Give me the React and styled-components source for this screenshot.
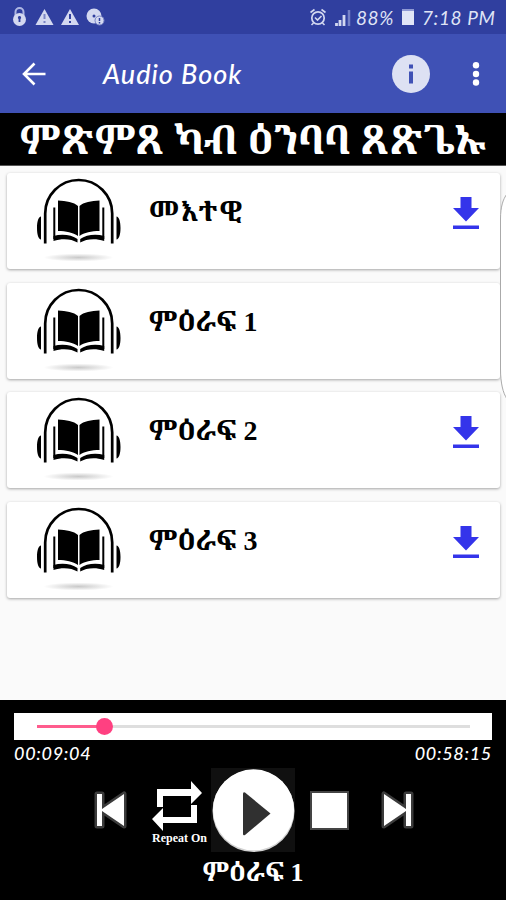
import React from "react";
//Styling
import styled, { createGlobalStyle } from "styled-components";

const chapters = [
  { id: 0, name: "መእተዊ", download: true, spacing: 1.3 },
  { id: 1, name: "ምዕራፍ 1", download: false, spacing: -0.2 },
  { id: 2, name: "ምዕራፍ 2", download: true, spacing: -0.2 },
  { id: 3, name: "ምዕራፍ 3", download: true, spacing: -0.2 },
];

const player = { elapsed: "00:09:04", total: "00:58:15", progress: 15.6 };

const App = () => {
  return (
    <Screen>
      <GlobalStyle />
      <StatusBar>
        <NoticeIcons />
        <StatusRight>
          <SignalIcons />
          <Handwritten $width={44}>88%</Handwritten>
          <Battery />
          <Handwritten $width={76}>7:18 PM</Handwritten>
        </StatusRight>
      </StatusBar>
      <AppBar>
        <BackIcon />
        <AppTitle>Audio Book</AppTitle>
        <InfoIcon />
        <MenuIcon />
      </AppBar>
      <Banner>
        <h1>ምጽምጸ ካብ ዕንባባ ጸጽጌኡ</h1>
      </Banner>
      <List>
        {chapters.map((chapter) => (
          <Card key={chapter.id} $spacing={chapter.spacing}>
            <BookIcon />
            <h2>{chapter.name}</h2>
            {chapter.download && <DownloadIcon />}
          </Card>
        ))}
      </List>
      <Player>
        <Seek>
          <Track>
            <Played style={{ width: `${player.progress}%` }} />
          </Track>
        </Seek>
        <Times>
          <span>{player.elapsed}</span>
          <span>{player.total}</span>
        </Times>
        <Controls>
          <PreviousIcon />
          <Repeat>
            <RepeatIcon />
            <p>Repeat On</p>
          </Repeat>
          <PlayIcon />
          <Stop />
          <NextIcon />
        </Controls>
        <NowPlaying>ምዕራፍ 1</NowPlaying>
      </Player>
      <EdgeHandle width="8" height="210" viewBox="0 0 8 210">
        <path d="M8 1C4 6 1.500 14 1.500 26V176C1.500 190 4 200 8 206" fill="#fff" stroke="#aaa" />
      </EdgeHandle>
    </Screen>
  );
};

const NoticeIcons = () => (
  <svg width="94" height="22" viewBox="0 0 94 22" fill="#d3d8f0">
    <path d="M3.500 10V6a4 4 0 0 1 8 0v4" fill="none" stroke="#aeb7e3" strokeWidth="2" />
    <circle cx="7.500" cy="13.500" r="6.500" />
    <path d="M7.500 10a1.700 1.700 0 0 1 .9 3.100V16H6.600v-2.900A1.700 1.700 0 0 1 7.500 10" fill="#303f9f" />
    <path d="M32.500 3 41.500 19H23.500ZM58 3 67 19H49Z" />
    <path d="M32.500 8v5M32.500 15v2" stroke="#7a84c5" strokeWidth="2" />
    <path d="M58 8v5M58 15v2" stroke="#303f9f" strokeWidth="2" />
    <circle cx="82" cy="10" r="7.500" />
    <circle cx="82" cy="10" r="1.500" fill="#303f9f" />
    <circle cx="87.500" cy="14.500" r="4.500" stroke="#7a84c5" />
    <path d="M87.500 12v3M87.500 16v1.500" stroke="#303f9f" strokeWidth="1.500" />
  </svg>
);

const SignalIcons = () => (
  <svg width="44" height="22" viewBox="0 0 44 22" fill="none" stroke="#d3d8f0">
    <circle cx="10" cy="12" r="6.200" strokeWidth="1.700" />
    <path d="m7 11.500 2.500 2.500 4-4M2.500 6.500l4-3M17.500 6.500l-4-3M5.500 17l-2 2M14.500 17l2 2" strokeWidth="1.600" />
    <path d="M28.500 20v-3M32 20v-6M36 20V9" strokeWidth="2.800" />
    <path d="M41 20V4" stroke="#7480c6" strokeWidth="2.500" />
  </svg>
);

const BackIcon = () => (
  <svg width="24" height="24" viewBox="0 0 24 24" fill="none" stroke="#fff" strokeWidth="2.600">
    <path d="M23.500 12H3M12.500 1.500 2 12l10.500 10.500" />
  </svg>
);

const InfoIcon = () => (
  <svg width="38" height="38" viewBox="0 0 38 38">
    <circle cx="19" cy="19" r="19" fill="#dde1f3" />
    <path d="M17 9.500h4v4h-4zM17 16.500h4v12h-4z" fill="#3f51b5" />
  </svg>
);

const MenuIcon = () => (
  <svg width="8" height="26" viewBox="0 0 8 26" fill="#fff">
    <circle cx="4" cy="4.300" r="3.200" />
    <circle cx="4" cy="13" r="3.200" />
    <circle cx="4" cy="21.500" r="3.200" />
  </svg>
);

// Open book between headphones, with a soft shadow under it.
const BookIcon = () => (
  <svg width="86" height="86" viewBox="0 0 86 86">
    <defs>
      <radialGradient id="shade">
        <stop offset="0" stopColor="#c9c9c9" />
        <stop offset="1" stopColor="#fff" />
      </radialGradient>
    </defs>
    <path d="M9.200 65.500V35.500a33.500 33.500 0 0 1 67 0V65.500" fill="none" stroke="#000" strokeWidth="2.700" />
    <path d="M5 38.500v23C2.500 61 1 57 1 50s1.500-11 4-11.500M80.500 38.500v23c2.500-.5 4-4.500 4-11.500s-1.500-11-4-11.500" />
    <path d="M22 22.500C30 23 38 24 42 28v30C37 54.500 30 53 22 53ZM63.500 22.500C55.500 23 47.500 24 43.500 28v30c4.500-3.500 12-5 20-5Z" />
    <path d="M18.300 29.500V61M67.300 29.500V61" stroke="#000" strokeWidth="2" fill="none" />
    <path d="M17.500 58c8-2.500 18-1.500 24 3v3.500c-6-3.500-15-4.500-24-1.500ZM68.200 58c-8-2.500-18-1.500-24 3v3.500c6-3.500 15-4.500 24-1.500Z" />
    <ellipse cx="42.500" cy="79.500" rx="35" ry="4" fill="url(#shade)" />
  </svg>
);

const DownloadIcon = () => (
  <svg width="26" height="33" viewBox="0 0 26 33" fill="#3434ea">
    <path d="M7.500 0h11v11H26L13 24.500 0 11h7.500ZM0 28.500h26V32H0Z" />
  </svg>
);

const PreviousIcon = () => (
  <svg width="34" height="40" viewBox="0 0 34 40">
    <path d="M4 4h5v15L31 4v32L9 21v15H4Z" fill="#fff" stroke="#3c3c3c" strokeWidth="5" paintOrder="stroke" strokeLinejoin="round" />
  </svg>
);

const NextIcon = () => (
  <svg width="34" height="40" viewBox="0 0 34 40">
    <path d="M31 4h-5v15L4 4v32l22-15v15h5Z" fill="#fff" stroke="#3c3c3c" strokeWidth="5" paintOrder="stroke" strokeLinejoin="round" />
  </svg>
);

const RepeatIcon = () => (
  <svg width="52" height="50" viewBox="0 0 52 50" fill="#fff">
    <path d="M6 26V8h34V0l11 12-11 11v-8H12v11ZM46 24v18H12v8L1 38l11-11v9h28V24Z" />
  </svg>
);

const PlayIcon = () => (
  <svg width="84" height="84" viewBox="0 0 84 84">
    <path d="M0 0h84v84H0Z" fill="#101010" />
    <circle cx="42.500" cy="43" r="41" fill="#d2d2d2" />
    <circle cx="42.500" cy="41.800" r="40.500" fill="#fff" />
    <path d="M34 24.500 59.500 45.500 34 67Q32 68 32 66V26Q32 23.500 34 24.500Z" fill="#303030" />
  </svg>
);

const GlobalStyle = createGlobalStyle`
  * {
    margin: 0;
    padding: 0;
    box-sizing: border-box;
  }

  body {
    background: #fafafa;
    overflow: hidden;
  }

  svg {
    display: block;
    flex-shrink: 0;
  }
`;

const Screen = styled.div`
  width: 506px;
  height: 900px;
  display: flex;
  flex-direction: column;
  position: relative;
  overflow: hidden;
  background: #fafafa;
  color: black;
  font-family: "Liberation Serif", "Noto Serif Ethiopic", "Noto Sans Ethiopic",
    serif;
`;

const StatusBar = styled.header`
  height: 34px;
  display: flex;
  align-items: center;
  justify-content: space-between;
  padding: 0 8px 0 12px;
  background: #303f9f;
`;

const StatusRight = styled.div`
  display: flex;
  align-items: center;
`;

const Handwritten = styled.span`
  width: ${(props) => props.$width}px;
  margin-left: 4px;
  font: italic 19px Lato, sans-serif;
  letter-spacing: 0.6px;
  color: #dfe3f5;
  white-space: nowrap;
`;

const Battery = styled.i`
  width: 12px;
  height: 16px;
  margin: 0 4px 0 2px;
  border-top: 2px solid #8f99d3;
  background: #e1e5f6;
`;

const AppBar = styled.div`
  height: 79px;
  display: flex;
  align-items: center;
  padding: 0 26px 0 22px;
  background: #3f51b5;
  svg:last-child {
    margin-left: 42px;
  }
`;

const AppTitle = styled.div`
  flex: 1;
  margin-left: 57px;
  font: italic 500 27px Lato, sans-serif;
  letter-spacing: 1px;
  color: white;
`;

const Banner = styled.div`
  height: 53px;
  display: flex;
  align-items: center;
  justify-content: center;
  padding-top: 4px;
  background: black;
  border-bottom: 1px solid #555;
  color: white;
  h1 {
    font-size: 40px;
    line-height: 48px;
    letter-spacing: -0.2px;
    white-space: nowrap;
  }
`;

const List = styled.main`
  flex: 1;
  display: flex;
  flex-direction: column;
  gap: 13.7px;
  padding: 7px 6px 0 7px;
`;

const Card = styled.section`
  height: 96px;
  display: flex;
  align-items: flex-start;
  padding: 5px 21px 0 29px;
  border-radius: 3px;
  background: white;
  box-shadow: 0 1px 3px rgba(0, 0, 0, 0.35);
  h2 {
    flex: 1;
    margin: 14px 0 0 27px;
    font-size: 28px;
    line-height: 40px;
    letter-spacing: ${(props) => props.$spacing}px;
    white-space: nowrap;
  }
  svg:last-child {
    margin-top: 19px;
  }
`;

const Player = styled.footer`
  height: 200px;
  display: flex;
  flex-direction: column;
  padding: 13px 14px 0;
  background: black;
  color: white;
`;

const Seek = styled.div`
  height: 27px;
  display: flex;
  align-items: center;
  padding: 0 22px 0 23px;
  background: white;
`;

const Track = styled.div`
  flex: 1;
  height: 3px;
  background: #dedede;
`;

const Played = styled.div`
  height: 3px;
  display: flex;
  align-items: center;
  justify-content: flex-end;
  background: #ff5c8d;
  &::after {
    content: "";
    flex-shrink: 0;
    width: 17px;
    height: 17px;
    margin-right: -8px;
    border-radius: 50%;
    background: #ff4081;
  }
`;

const Times = styled.div`
  height: 27px;
  display: flex;
  justify-content: space-between;
  font: italic 500 18px/27px Lato, sans-serif;
  letter-spacing: 0.7px;
`;

const Controls = styled.div`
  height: 86px;
  display: flex;
  align-items: center;
  padding-left: 79px;
`;

const Repeat = styled.div`
  width: 57px;
  margin: 0 3px 0 24px;
  padding-top: 5px;
  p {
    padding-left: 1px;
    font: bold 12px/14px "Liberation Serif", serif;
    white-space: nowrap;
  }
`;

const Stop = styled.i`
  width: 39px;
  height: 39px;
  margin: 0 31px 0 15px;
  border: 2px solid #444;
  background: white;
`;

const NowPlaying = styled.h3`
  padding-top: 3px;
  font-size: 26px;
  line-height: 34px;
  letter-spacing: -0.2px;
  text-align: center;
  white-space: nowrap;
`;

const EdgeHandle = styled.svg`
  position: absolute;
  top: 193px;
  right: -1px;
`;

export default App;
